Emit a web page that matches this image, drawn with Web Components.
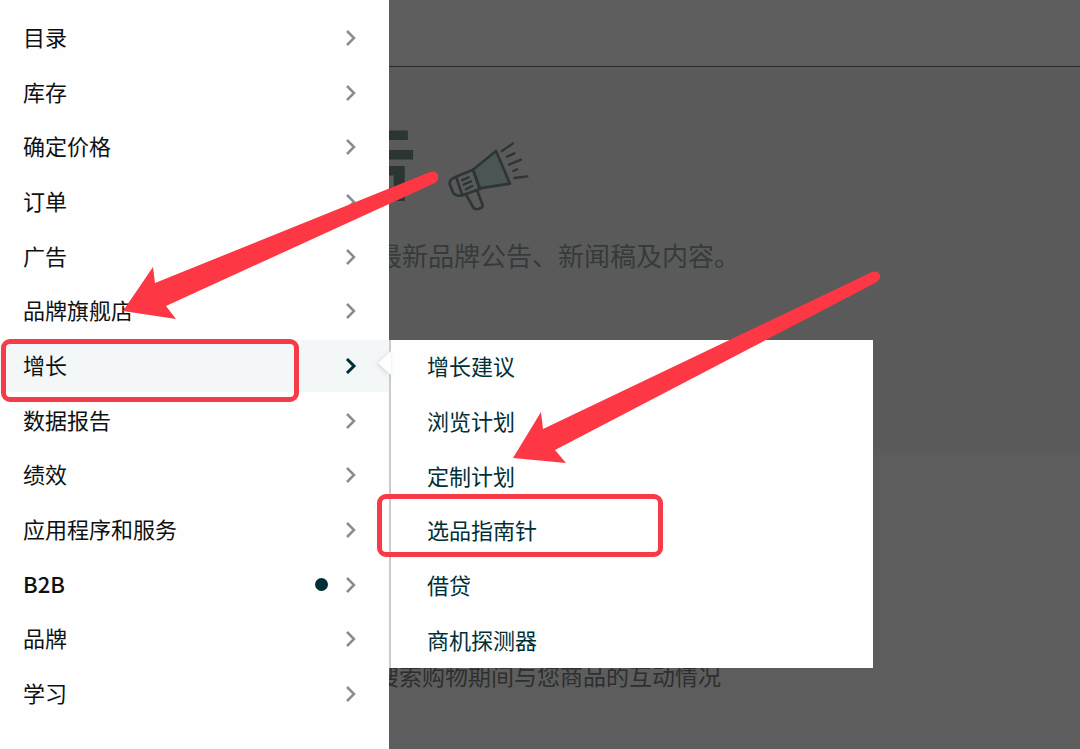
<!DOCTYPE html>
<html lang="zh-CN">
<head>
<meta charset="utf-8">
<meta name="viewport" content="width=device-width, initial-scale=1">
<title>卖家平台菜单</title>
<style>
  html, body { margin: 0; min-height: 100vh; background: #5d5d5d; }
  body {
    position: relative;
    overflow-x: hidden;
    font-family: "Noto Sans CJK SC", "Noto Sans", sans-serif;
    font-size: 22px;
    line-height: 32px;
    color: #0f1111;
    --accent: #002f36;
    --mark: #fd3743;
  }
</style>
</head>
<body>
<dimmed-page>
  <span slot="title">公告</span>
  <megaphone-icon slot="icon"></megaphone-icon>
  <span slot="lead">最新品牌公告、新闻稿及内容。</span>
  <span slot="note">搜索购物期间与您商品的互动情况</span>
</dimmed-page>

<nav-drawer>
  <nav-item>目录</nav-item>
  <nav-item>库存</nav-item>
  <nav-item>确定价格</nav-item>
  <nav-item>订单</nav-item>
  <nav-item>广告</nav-item>
  <nav-item>品牌旗舰店<callout-arrow slot="over" class="first"></callout-arrow></nav-item>
  <nav-item active>增长
    <fly-menu slot="over">
      <fly-link>增长建议</fly-link>
      <fly-link>浏览计划</fly-link>
      <fly-link>定制计划<callout-arrow slot="over" class="second"></callout-arrow></fly-link>
      <fly-link>选品指南针<callout-box slot="over" class="sub"></callout-box></fly-link>
      <fly-link>借贷</fly-link>
      <fly-link>商机探测器</fly-link>
    </fly-menu>
    <callout-box slot="over" class="main"></callout-box>
  </nav-item>
  <nav-item>数据报告</nav-item>
  <nav-item>绩效</nav-item>
  <nav-item>应用程序和服务</nav-item>
  <nav-item dot strong>B2B</nav-item>
  <nav-item>品牌</nav-item>
  <nav-item>学习</nav-item>
</nav-drawer>

<script>
function define(name, html) {
  customElements.define(name, class extends HTMLElement {
    constructor() {
      super();
      this.attachShadow({ mode: "open" }).innerHTML = html;
    }
  });
}

define("dimmed-page", `
  <style>
    :host { display: flex; flex-direction: column; min-height: 100vh; background: #5d5d5d; color: #353a3a; }
    header { height: 66px; background: #5d5d5d; border-bottom: 1px solid #2b2b2b; }
    .hero { background: #5a5a5a; padding: 34px 0 184px; display: flex; flex-direction: column; gap: 28px; }
    .row { display: flex; align-items: center; gap: 30px; padding-left: 246px; }
    h1 { margin: 0; font-size: 86px; line-height: 94px; font-weight: 700; color: #2b3533; }
    p { margin: 0; padding-left: 376px; white-space: nowrap; }
    .lead { font-size: 26px; line-height: 32px; }
    .more { padding-top: 204px; }
    .note { font-size: 23px; line-height: 32px; color: #2d2f2f; }
  </style>
  <header></header>
  <section class="hero">
    <div class="row"><h1><slot name="title"></slot></h1><slot name="icon"></slot></div>
    <p class="lead"><slot name="lead"></slot></p>
  </section>
  <section class="more"><p class="note"><slot name="note"></slot></p></section>
`);

define("megaphone-icon", `
  <style>:host { display: block; padding-top: 40px; } svg { display: block; }</style>
  <svg width="81" height="70" viewBox="204 90 243 210" fill="none" stroke="#2e3537" stroke-width="8" stroke-linejoin="round" stroke-linecap="round" aria-hidden="true">
    <path d="M279 176 L348 120 L390 218 L298 232 Z" fill="#4a5556"/>
    <path d="M228 197 L279 176 L300 234 L247 253 Z"/>
    <path d="M228 198 C214 201 206 212 210 221 L218 242 C222 253 236 257 247 252"/>
    <path d="M258 250 L279 288 Q284 297 294 294 L303 291 Q310 287 307 280 L291 238"/>
    <path d="M246 208 L266 199 M251 221 L273 211 M257 235 L277 225" stroke-width="7"/>
    <path d="M366 120 L399 97 M381 137 L403 127 M387 161 L423 146 M400 180 L411 175 M403 201 L442 196" stroke-width="7"/>
  </svg>
`);

define("nav-drawer", `
  <style>
    :host {
      position: absolute; z-index: 1; top: 0; left: 0;
      width: 389px; min-height: 100vh; box-sizing: border-box;
      padding: 12px 0 29px; background: #fefefe;
      display: flex;
    }
    nav { flex: 1; display: flex; flex-direction: column; justify-content: space-between; }
  </style>
  <nav aria-label="主菜单"><slot></slot></nav>
`);

define("nav-item", `
  <style>
    :host { display: block; position: relative; }
    button {
      width: 100%; height: 52px; border: 0; margin: 0; padding: 0 32px 0 23px;
      display: flex; align-items: center; gap: 17px;
      background: none; font: inherit; color: inherit; text-align: left; cursor: pointer;
    }
    .label { flex: 1; padding-bottom: 4px; }
    .dot { display: none; width: 13px; height: 13px; border-radius: 50%; background: var(--accent); }
    svg { display: block; stroke: #8a8d8f; stroke-width: 2.5; fill: none; }
    :host([active]) button { background: #f3f7f8; }
    :host([active]) svg { stroke: var(--accent); stroke-width: 3; }
    :host([dot]) .dot { display: block; }
    :host([strong]) .label { font-weight: 500; }
  </style>
  <button type="button">
    <span class="label"><slot></slot></span>
    <span class="dot"></span>
    <svg width="12" height="16" viewBox="0 0 12 16" aria-hidden="true"><path d="M2 1 L9 8 L2 15"/></svg>
  </button>
  <slot name="over"></slot>
`);

define("fly-menu", `
  <style>
    :host {
      position: absolute; z-index: 1; top: 0; left: 100%;
      width: 484px; min-height: 328px; box-sizing: border-box;
      display: grid; grid-auto-rows: 1fr;
      background: #fefefe; border-left: 2px solid #c9cbcc; color: var(--accent);
    }
    .notch { position: absolute; top: 11px; left: -13px; filter: drop-shadow(-1px 1px 2px #0002); }
  </style>
  <svg class="notch" width="13" height="24" viewBox="0 0 13 24" aria-hidden="true"><path d="M13 0 L0 12 L13 24 Z" fill="#fefefe"/></svg>
  <slot></slot>
`);

define("fly-link", `
  <style>
    :host { display: flex; position: relative; }
    a { flex: 1; display: flex; align-items: center; padding: 0 0 4px 36px; color: inherit; text-decoration: none; }
  </style>
  <a href="#"><span><slot></slot></span></a>
  <slot name="over"></slot>
`);

define("callout-box", `
  <style>
    :host {
      position: absolute; z-index: 2; box-sizing: border-box; height: 63px;
      border: 5px solid #f53a48; border-radius: 9px; pointer-events: none;
    }
    :host(.main) { top: -1px; left: 1px; width: 298px; }
    :host(.sub) { top: -10px; left: -14px; width: 286px; }
  </style>
`);

define("callout-arrow", `
  <style>
    :host { position: absolute; z-index: 2; pointer-events: none; }
    :host(.first) { top: -120px; left: 120px; }
    :host(.second) { top: -184px; left: 119px; }
    svg { display: none; fill: var(--mark); }
    :host(.first) .a, :host(.second) .b { display: block; }
  </style>
  <svg class="a" width="325" height="160" viewBox="120 165 325 160" aria-hidden="true">
    <path d="M123 311 L153 267 L155 283 L430 172 Q436 170 438 175 Q439 180 435 183 L166 306 L176 319 Z"/>
  </svg>
  <svg class="b" width="375" height="205" viewBox="510 265 375 205" aria-hidden="true">
    <path d="M513 458 L541 412 L543 429 L872 272 Q878 270 880 275 Q881 279 877 282 L555 450 L566 463 Z"/>
  </svg>
`);
</script>
</body>
</html>
